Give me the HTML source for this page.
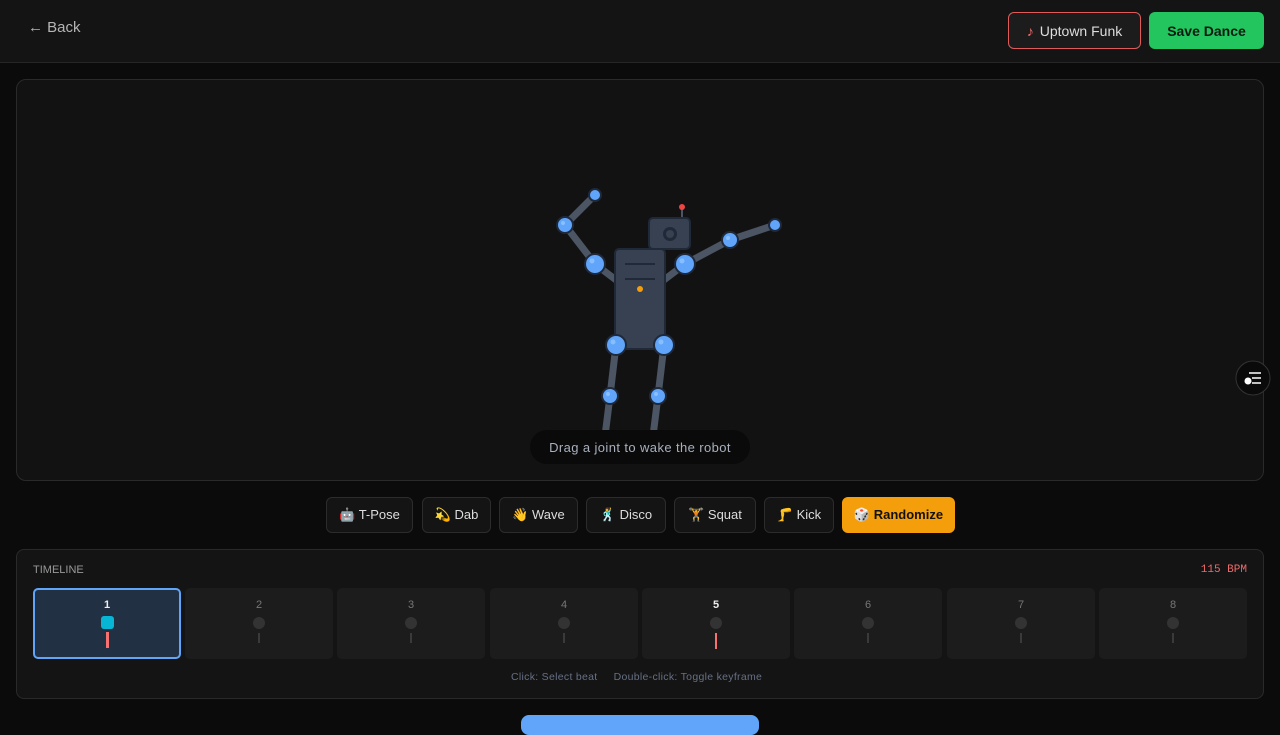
<!DOCTYPE html>
<html><head><meta charset="utf-8"><style>
*{box-sizing:border-box;margin:0;padding:0}
body{width:1280px;height:720px;overflow:hidden;background:#0b0b0b;font-family:"Liberation Sans","Noto Sans CJK SC",sans-serif;color:#ddd;position:relative}
.hdr{position:absolute;left:0;top:0;width:1280px;height:63px;background:#141414;border-bottom:1px solid #262626}
.back{position:absolute;left:28px;top:19px;font-size:15px;color:#b5b5b5}
.btn{position:absolute;top:12px;height:37px;border-radius:6px;font-size:14px;display:flex;align-items:center;justify-content:center}
.stage{position:absolute;left:16px;top:79px;width:1248px;height:402px;background:#121212;border:1px solid #2a2a2a;border-radius:10px}
.tip{position:absolute;left:530px;top:430px;width:220px;height:34px;border-radius:17px;background:#0a0a0a;color:#a8b0bd;font-size:13px;letter-spacing:.4px;display:flex;align-items:center;justify-content:center}
.pose{position:absolute;top:497px;height:36px;border-radius:6px;background:#141414;border:1px solid #2c2c2c;font-size:13px;color:#ddd;display:flex;align-items:center;justify-content:center;gap:5px}
.tl{position:absolute;left:16px;top:549px;width:1248px;height:150px;background:#141414;border:1px solid #2a2a2a;border-radius:8px}
.cell{position:absolute;top:588px;width:148px;height:71px;background:#1c1c1c;border-radius:5px}
.cell .n{position:absolute;top:11px;width:100%;text-align:center;font-size:11px;color:#777}
.cell .d{position:absolute;left:68px;top:29px;width:12px;height:12px;border-radius:50%;background:#333}
.cell .l{position:absolute;left:73px;top:45px;width:2px;height:10px;background:#3a3a3a}
</style></head><body>
<div class="hdr"></div>
<div class="back">← Back</div>
<div class="btn" style="left:1008px;width:133px;background:#1c1c1c;border:1px solid #e05a5a;color:#ddd"><span style="color:#ef6b6b;margin-right:6px">♪</span>Uptown Funk</div>
<div class="btn" style="left:1149px;width:115px;background:#22c55e;color:#0b1a10;font-weight:bold">Save Dance</div>
<div class="stage"></div>
<svg style="position:absolute;left:0;top:0" width="1280" height="720">
<g stroke="#4b5563" stroke-width="7" stroke-linecap="round">
<line x1="595" y1="195" x2="565" y2="225"/><line x1="565" y1="225" x2="595" y2="264"/><line x1="595" y1="264" x2="620" y2="283"/>
<line x1="775" y1="225" x2="730" y2="240"/><line x1="730" y1="240" x2="685" y2="264"/><line x1="685" y1="264" x2="660" y2="283"/>
<line x1="616" y1="345" x2="610" y2="396"/><line x1="610" y1="396" x2="604" y2="444"/>
<line x1="664" y1="345" x2="658" y2="396"/><line x1="658" y1="396" x2="652" y2="444"/>
</g>
<line x1="682" y1="207" x2="682" y2="219" stroke="#4b5563" stroke-width="2"/>
<circle cx="682" cy="207" r="3" fill="#ef4444"/>
<rect x="649" y="218" width="41" height="31" rx="4" fill="#374151" stroke="#1f2937" stroke-width="2"/>
<circle cx="670" cy="234" r="7" fill="#1f2937"/><circle cx="670" cy="234" r="4" fill="#374151"/>
<rect x="615" y="249" width="50" height="100" rx="4" fill="#374151" stroke="#1f2937" stroke-width="2"/>
<line x1="625" y1="264" x2="655" y2="264" stroke="#1f2937" stroke-width="2"/>
<line x1="625" y1="279" x2="655" y2="279" stroke="#1f2937" stroke-width="2"/>
<circle cx="640" cy="289" r="3" fill="#f59e0b"/>
<g fill="#60a5fa" stroke="#1e293b" stroke-width="2">
<circle cx="595" cy="195" r="6"/><circle cx="565" cy="225" r="8"/><circle cx="595" cy="264" r="10"/>
<circle cx="775" cy="225" r="6"/><circle cx="730" cy="240" r="8"/><circle cx="685" cy="264" r="10"/>
<circle cx="616" cy="345" r="10"/><circle cx="664" cy="345" r="10"/>
<circle cx="610" cy="396" r="8"/><circle cx="658" cy="396" r="8"/>
<circle cx="604" cy="444" r="7"/><circle cx="652" cy="444" r="7"/>
</g>
<g fill="#93c5fd" opacity=".8">
<circle cx="592" cy="261" r="2.5"/><circle cx="682" cy="261" r="2.5"/><circle cx="613" cy="342" r="2.5"/><circle cx="661" cy="342" r="2.5"/>
<circle cx="563" cy="223" r="2"/><circle cx="728" cy="238" r="2"/><circle cx="608" cy="394" r="2"/><circle cx="656" cy="394" r="2"/>
</g>
<circle cx="1253" cy="378" r="17" fill="#0a0a0a" stroke="#333" stroke-width="1"/>
<g stroke="#fff" stroke-width="1.5"><line x1="1249" y1="373" x2="1261" y2="373"/><line x1="1252" y1="378" x2="1261" y2="378"/><line x1="1252" y1="383" x2="1261" y2="383"/></g>
<circle cx="1248" cy="381" r="3.5" fill="#fff"/>
</svg>
<div class="tip">Drag a joint to wake the robot</div>
<div class="pose" style="left:326px;width:87px">🤖 T-Pose</div>
<div class="pose" style="left:422px;width:69px">💫 Dab</div>
<div class="pose" style="left:499px;width:79px">👋 Wave</div>
<div class="pose" style="left:586px;width:80px">🕺 Disco</div>
<div class="pose" style="left:674px;width:82px">🏋 Squat</div>
<div class="pose" style="left:764px;width:70px">🦵 Kick</div>
<div class="pose" style="left:842px;width:113px;background:#f59e0b;border-color:#f59e0b;color:#111;font-weight:bold">🎲 Randomize</div>
<div class="tl"></div>
<div style="position:absolute;left:33px;top:564px;font-size:11px;color:#999">TIMELINE</div>
<div style="position:absolute;right:33px;top:564px;font-size:11px;color:#ef6b6b;font-family:'Liberation Mono',monospace">115 BPM</div>
<div class="cell" style="left:33px;background:#223044;border:2px solid #60a5fa"><div class="n" style="top:9px;color:#eee;font-weight:bold">1</div><div style="position:absolute;left:66px;top:26px;width:13px;height:13px;border-radius:3px;background:#06b6d4"></div><div style="position:absolute;left:71px;top:42px;width:3px;height:16px;background:#f87171"></div></div>
<div class="cell" style="left:185px"><div class="n">2</div><div class="d"></div><div class="l"></div></div>
<div class="cell" style="left:337px"><div class="n">3</div><div class="d"></div><div class="l"></div></div>
<div class="cell" style="left:490px"><div class="n">4</div><div class="d"></div><div class="l"></div></div>
<div class="cell" style="left:642px"><div class="n" style="color:#eee;font-weight:bold">5</div><div class="d"></div><div class="l" style="background:#f87171;height:16px"></div></div>
<div class="cell" style="left:794px"><div class="n">6</div><div class="d"></div><div class="l"></div></div>
<div class="cell" style="left:947px"><div class="n">7</div><div class="d"></div><div class="l"></div></div>
<div class="cell" style="left:1099px"><div class="n">8</div><div class="d"></div><div class="l"></div></div>
<div style="position:absolute;left:511px;top:671px;font-size:10.5px;letter-spacing:.3px;color:#667085">Click: Select beat&nbsp;&nbsp;&nbsp;&nbsp;&nbsp;Double-click: Toggle keyframe</div>
<div style="position:absolute;left:521px;top:715px;width:238px;height:20px;border-radius:8px;background:#60a5fa"></div>
</body></html>
